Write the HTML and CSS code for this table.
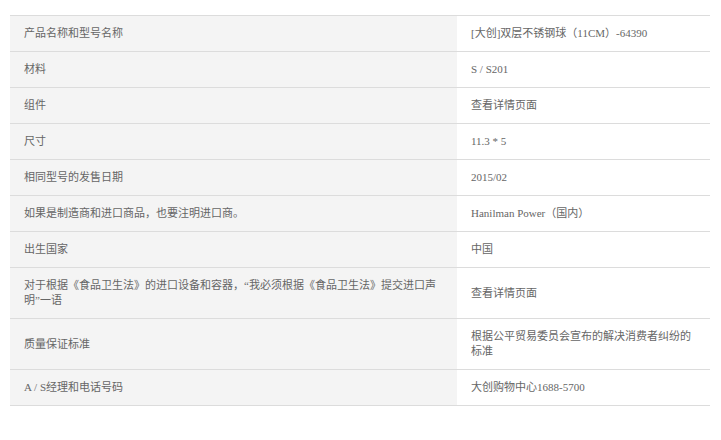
FILE: index.html
```html
<!DOCTYPE html>
<html lang="zh">
<head>
<meta charset="utf-8">
<link rel="stylesheet" href="styles.css">
</head>
<body>
<div class="spec">
  <div class="row"><div class="k">产品名称和型号名称</div><div class="v">[大创]双层不锈钢球（11CM）-64390</div></div>
  <div class="row"><div class="k">材料</div><div class="v">S / S201</div></div>
  <div class="row"><div class="k">组件</div><div class="v">查看详情页面</div></div>
  <div class="row"><div class="k">尺寸</div><div class="v">11.3 * 5</div></div>
  <div class="row"><div class="k">相同型号的发售日期</div><div class="v">2015/02</div></div>
  <div class="row"><div class="k">如果是制造商和进口商品，也要注明进口商。</div><div class="v">Hanilman Power（国内）</div></div>
  <div class="row"><div class="k">出生国家</div><div class="v">中国</div></div>
  <div class="row"><div class="k">对于根据《食品卫生法》的进口设备和容器，“我必须根据《食品卫生法》提交进口声明”一语</div><div class="v">查看详情页面</div></div>
  <div class="row"><div class="k">质量保证标准</div><div class="v">根据公平贸易委员会宣布的解决消费者纠纷的标准</div></div>
  <div class="row"><div class="k">A / S经理和电话号码</div><div class="v">大创购物中心1688-5700</div></div>
</div>
</body>
</html>
```

FILE: styles.css
```css
html, body {
  margin: 0;
  padding: 0;
  background: #fff;
}
body {
  padding: 15px 11px 0 10px;
  font-family: "Liberation Serif", "Noto Sans CJK SC", serif;
  font-size: 11px;
  line-height: 15px;
  color: #666;
}
.spec {
  border-top: 1px solid #dcdcdc;
}
.row {
  display: grid;
  grid-template-columns: 447px 1fr;
  border-bottom: 1px solid #dcdcdc;
}
.k {
  background: #f4f4f4;
  padding: 10px 14px;
  display: flex;
  align-items: center;
}
.v {
  background: #fff;
  padding: 10px 14px;
  display: flex;
  align-items: center;
}
```
